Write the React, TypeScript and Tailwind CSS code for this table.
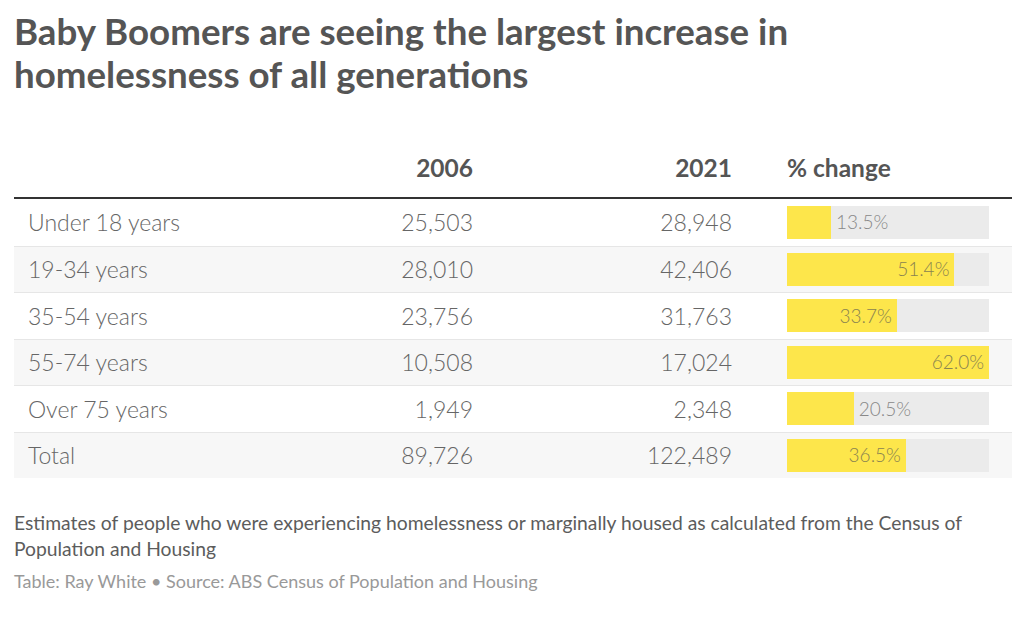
import React from "react";

const rows = [
  { label: "Under 18 years", a: "25,503", b: "28,948", pct: 13.5 },
  { label: "19-34 years", a: "28,010", b: "42,406", pct: 51.4 },
  { label: "35-54 years", a: "23,756", b: "31,763", pct: 33.7 },
  { label: "55-74 years", a: "10,508", b: "17,024", pct: 62.0 },
  { label: "Over 75 years", a: "1,949", b: "2,348", pct: 20.5 },
  { label: "Total", a: "89,726", b: "122,489", pct: 36.5 },
];

const MAX = 62.0;
const TRACK = 202;

export default function App() {
  return (
    <div className="w-[1024px] h-[619px] bg-white font-['Lato',sans-serif] px-[14px] pt-[10px] overflow-hidden">
      <h1 className="text-[36.7px] leading-[43px] font-bold text-[#555555] m-0 whitespace-nowrap">
        Baby Boomers are seeing the largest increase in
        <br />
        homelessness of all generations
      </h1>

      <div className="w-[998px] mt-[59px]">
        <div className="flex items-end border-b-2 border-[#333333] pb-[17px] text-[24.5px] leading-[25px] font-bold text-[#555555]">
          <div className="w-[277px]" />
          <div className="w-[182px] text-right">2006</div>
          <div className="w-[259px] text-right">2021</div>
          <div className="flex-1 pl-[55px]">% change</div>
        </div>
        {rows.map((r, i) => {
          const w = (r.pct / MAX) * TRACK;
          const inside = r.pct >= 30;
          return (
            <div
              key={r.label}
              className={`flex items-center h-[46.5px] text-[23px] font-light text-[#666666] ${
                i % 2 === 1 ? "bg-[#f7f7f7]" : "bg-white"
              } ${i > 0 ? "border-t border-[#e6e6e6]" : ""}`}
            >
              <div className="w-[277px] pl-[14px]">{r.label}</div>
              <div className="w-[182px] text-right">{r.a}</div>
              <div className="w-[259px] text-right">{r.b}</div>
              <div className="flex-1 pl-[55px]">
                <div className="w-[202px] h-[33px] bg-[#ebebeb] flex items-center">
                  <div
                    className="h-full bg-[#fde64b] flex items-center justify-end"
                    style={{ width: `${w}px` }}
                  >
                    {inside && (
                      <span className="pr-[5px] text-[19px] text-[#8a8350]">
                        {r.pct.toFixed(1)}%
                      </span>
                    )}
                  </div>
                  {!inside && (
                    <span className="pl-[5px] text-[19px] text-[#888888]">
                      {r.pct.toFixed(1)}%
                    </span>
                  )}
                </div>
              </div>
            </div>
          );
        })}
      </div>

      <p className="mt-[32px] w-[998px] text-[19.3px] leading-[26px] text-[#5c5c5c] m-0">
        Estimates of people who were experiencing homelessness or marginally housed as calculated from the Census of Population and Housing
      </p>
      <p className="mt-[7px] text-[18px] leading-[24px] text-[#999999]">
        Table: Ray White • Source: ABS Census of Population and Housing
      </p>
    </div>
  );
}
